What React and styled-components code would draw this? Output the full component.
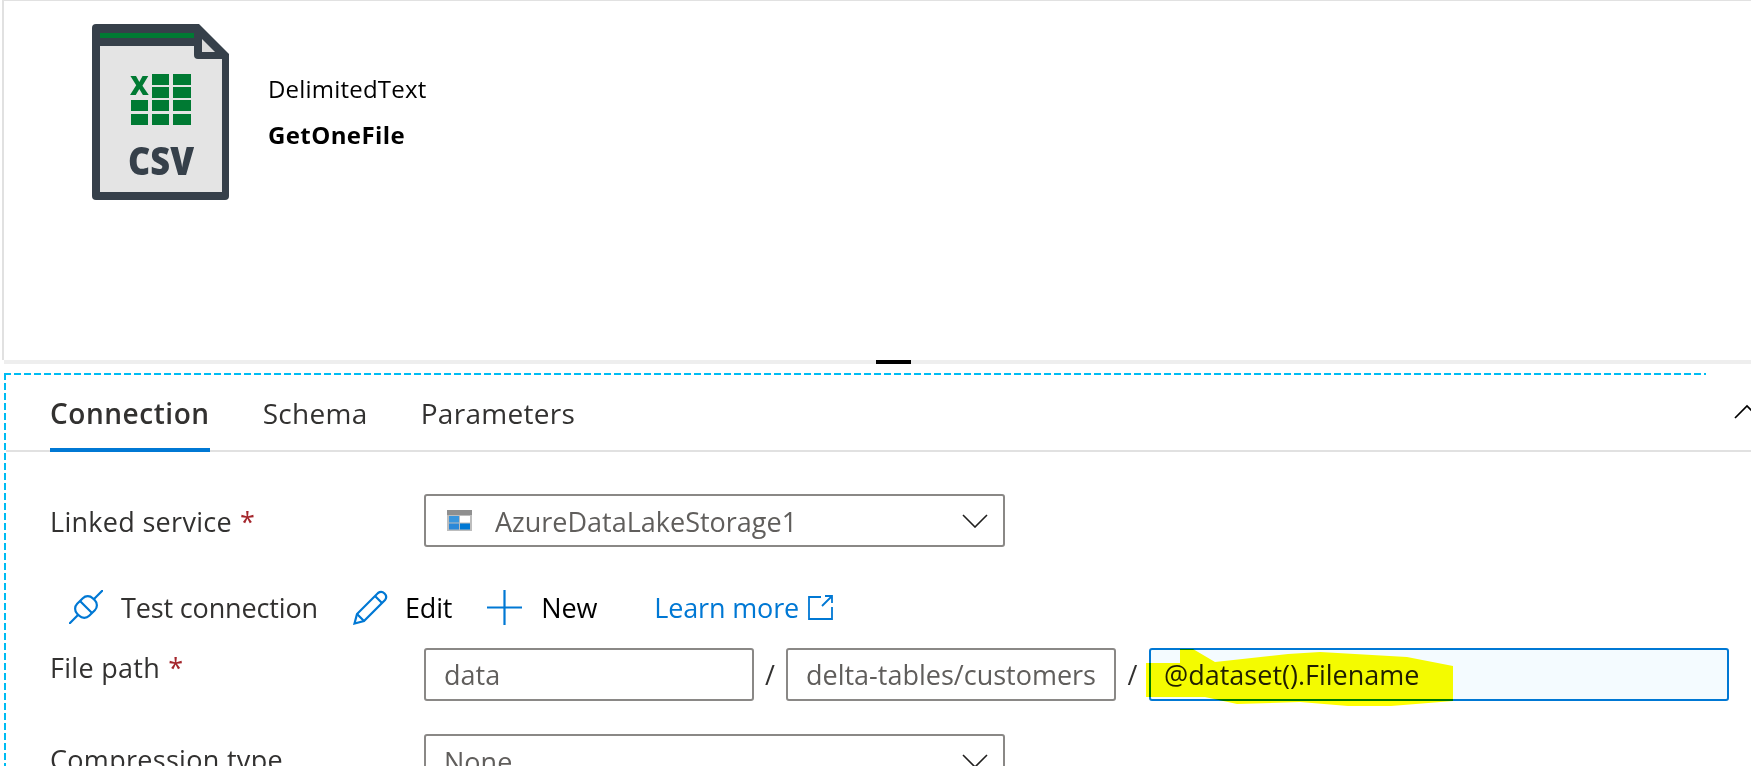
import styled, { createGlobalStyle } from 'styled-components';

const GlobalStyle = createGlobalStyle`
  html, body {
    margin: 0;
    padding: 0;
    background: #fff;
    overflow: hidden;
  }
  body {
    font-family: "Open Sans", "Noto Sans", sans-serif;
  }
`;

const Page = styled.div`
  width: 1751px;
  height: 766px;
  overflow: hidden;
  background: #fff;
`;

const Preview = styled.div`
  box-sizing: border-box;
  height: 360px;
  margin-left: 2px;
  padding: 21px 0 0 86px;
  display: flex;
  align-items: flex-start;
  gap: 38px;
  border-top: 1px solid #e1e1e1;
  border-left: 2px solid #e1e1e1;
`;

const FileIcon = styled.svg`
  width: 140px;
  height: 178px;
  flex: none;
`;

const Titles = styled.div`
  display: flex;
  flex-direction: column;
  padding-top: 52px;
  color: #000;
`;

const TypeName = styled.div`
  font-size: 24px;
  line-height: 30px;
  letter-spacing: 0.2px;
`;

const DatasetName = styled.div`
  margin-top: 16px;
  font-size: 24px;
  line-height: 30px;
  font-weight: 700;
  letter-spacing: 0.4px;
`;

const Splitter = styled.div`
  height: 4px;
  background: #eeeeee;
  margin-left: 4px;
`;

const SplitHandle = styled.div`
  width: 35px;
  height: 4px;
  background: #000;
  margin-left: 872px;
`;

const Panel = styled.div`
  position: relative;
  margin: 9px 45px 0 4px;
  padding: 2px 0 0 2px;
  height: 500px;
  background-image:
    repeating-linear-gradient(90deg, #00bcf2 0 7px, transparent 7px 10px),
    repeating-linear-gradient(180deg, #00bcf2 0 7px, transparent 7px 10px);
  background-size: 100% 2px, 2px 100%;
  background-position: top left, top left;
  background-repeat: no-repeat;
`;

const TabBar = styled.div`
  display: flex;
  gap: 53px;
  height: 77px;
  padding-left: 44px;
  margin-right: -45px;
  border-bottom: 2px solid #e1e1e1;
  box-sizing: border-box;
`;

const Tab = styled.div`
  height: 77px;
  box-sizing: border-box;
  padding-top: 20px;
  font-size: 28px;
  line-height: 36px;
  letter-spacing: ${p => (p.$active ? '0.55px' : '0.3px')};
  font-weight: ${p => (p.$active ? 600 : 400)};
  color: #323130;
  border-bottom: ${p => (p.$active ? '4px solid #0078d4' : 'none')};
`;

const Collapse = styled.svg`
  position: absolute;
  right: -54px;
  top: 31px;
  width: 26px;
  height: 15px;
`;

const Form = styled.div`
  padding: 42px 0 0 44px;
  margin-right: -45px;
`;

const FieldRow = styled.div`
  display: grid;
  grid-template-columns: 374px 1fr;
  align-items: start;
  margin-top: ${p => p.$gap || 0}px;
`;

const Label = styled.div`
  font-size: 27px;
  line-height: 34px;
  font-weight: 500;
  letter-spacing: 0.3px;
  color: #323130;
  padding-top: ${p => p.$top || 0}px;
  white-space: nowrap;
`;

const Star = styled.span`
  color: #a4262c;
  margin-left: 8px;
`;

const Select = styled.div`
  box-sizing: border-box;
  width: 581px;
  height: 53px;
  display: flex;
  align-items: center;
  padding: 0 15px 0 ${p => p.$pad}px;
  border: 2px solid #8a8886;
  border-radius: 3px;
  font-size: 27px;
  color: #605e5c;
`;

const SelectValue = styled.span`
  flex: 1;
  margin-left: ${p => p.$gap || 0}px;
  padding-top: 2px;
`;

const Chevron = styled.svg`
  width: 26px;
  height: 14px;
  flex: none;
`;

const ActionRow = styled.div`
  display: flex;
  align-items: center;
  height: 50px;
  margin-top: 35px;
  padding-left: 19px;
  font-size: 27px;
  letter-spacing: -0.15px;
  white-space: nowrap;
`;

const Action = styled.div`
  display: flex;
  align-items: center;
  gap: ${p => p.$gap}px;
  margin-right: ${p => p.$after}px;
  color: ${p => p.$color || '#000'};
`;

const ActionIcon = styled.svg`
  flex: none;
  width: ${p => p.$size}px;
  height: ${p => p.$size}px;
`;

const PathRow = styled.div`
  display: flex;
  align-items: center;
`;

const PathBox = styled.div`
  position: relative;
  box-sizing: border-box;
  width: ${p => p.$width}px;
  height: 53px;
  display: flex;
  align-items: center;
  padding-left: ${p => p.$pad}px;
  border: 2px solid ${p => (p.$focused ? '#0078d4' : '#8a8886')};
  border-radius: 3px;
  background: ${p => (p.$focused ? '#f4fbff' : '#fff')};
  color: ${p => (p.$focused ? '#201f1e' : '#605e5c')};
  font-size: 27px;
  white-space: nowrap;
`;

const Slash = styled.span`
  width: ${p => p.$width}px;
  text-align: center;
  font-size: 27px;
  color: #323130;
`;

const Highlight = styled.svg`
  position: absolute;
  left: -11px;
  top: -8px;
  width: 320px;
  height: 70px;
  mix-blend-mode: multiply;
  pointer-events: none;
`;

const grid = [
  [152, 73], [173, 73],
  [152, 86], [173, 86],
  [131, 99], [152, 99], [173, 99],
  [131, 113], [152, 113], [173, 113],
];

export default function App() {
  return (
    <Page>
      <GlobalStyle />
      <Preview>
        <FileIcon viewBox="90 21 140 178">
          <path d="M96 23 H199 L229 53 V195 a4 4 0 0 1 -4 4 H96 a4 4 0 0 1 -4 -4 V27 a4 4 0 0 1 4 -4 Z" fill="#36404a" />
          <path d="M100 45 H194 V54 a4 4 0 0 0 4 4 H222 V191 H100 Z" fill="#e4e4e4" />
          <rect x="100" y="32" width="94" height="5" fill="#007a33" />
          <path d="M202 38 L215 51 H202 Z" fill="#dcdcdc" />
          {grid.map(([x, y]) => (
            <rect key={`${x}-${y}`} x={x} y={y} width={x === 173 ? 18 : 17} height="11" fill="#007a33" />
          ))}
          <text x="139.5" y="94" textAnchor="middle" fontFamily="Open Sans" fontWeight="800" fontSize="26" fill="#007a33">X</text>
          <text x="161" y="174" textAnchor="middle" fontFamily="Open Sans" fontWeight="800" fontSize="38" textLength="66" lengthAdjust="spacingAndGlyphs" fill="#36404a">CSV</text>
        </FileIcon>
        <Titles>
          <TypeName>DelimitedText</TypeName>
          <DatasetName>GetOneFile</DatasetName>
        </Titles>
      </Preview>
      <Splitter>
        <SplitHandle />
      </Splitter>
      <Panel>
        <TabBar>
          <Tab $active>Connection</Tab>
          <Tab>Schema</Tab>
          <Tab>Parameters</Tab>
        </TabBar>
        <Collapse viewBox="0 0 26 15">
          <path d="M1 14 L13 2 L25 14" fill="none" stroke="#000" strokeWidth="1.7" />
        </Collapse>
        <Form>
          <FieldRow>
            <Label $top={11}>Linked service<Star>*</Star></Label>
            <Select $pad={21}>
              <svg width="25" height="21" viewBox="0 0 25 21">
                <rect width="25" height="21" fill="#bdbdbd" />
                <rect width="25" height="5" fill="#8f8f8f" />
                <rect x="2" y="6" width="10" height="6.5" fill="#3a96dd" />
                <rect x="13" y="6" width="10" height="6.5" fill="#fff" />
                <rect x="2" y="13.5" width="10" height="6" fill="#2b88d8" />
                <rect x="13" y="13.5" width="10" height="6" fill="#0078d4" />
              </svg>
              <SelectValue $gap={23}>AzureDataLakeStorage1</SelectValue>
              <Chevron viewBox="0 0 26 14">
                <path d="M1 1 L13 13 L25 1" fill="none" stroke="#201f1e" strokeWidth="1.6" />
              </Chevron>
            </Select>
          </FieldRow>
          <ActionRow>
            <Action $gap={18} $after={35} $color="#323130">
              <ActionIcon $size={34} viewBox="0 0 34 34" fill="none" stroke="#0078d4" strokeWidth="2.2">
                <g transform="rotate(-45 17 17)">
                  <path d="M-7 17 H6 M28 17 H41 M17 8.5 V25.5" />
                  <rect x="6" y="8.5" width="22" height="17" rx="7" />
                </g>
              </ActionIcon>
              Test connection
            </Action>
            <Action $gap={17} $after={35}>
              <ActionIcon $size={35} viewBox="0 0 35 35" fill="none" stroke="#0078d4" strokeWidth="2.2">
                <path d="M1.5 33.5 L4 24 L25 3 a5 5 0 0 1 7 7 L11 31 Z" />
                <path d="M4 24 L11 31 M22 6 L29 13" />
              </ActionIcon>
              Edit
            </Action>
            <Action $gap={19} $after={57}>
              <ActionIcon $size={35} viewBox="0 0 35 35" stroke="#0078d4" strokeWidth="2.2">
                <path d="M0 17.5 H35 M17.5 0 V35" />
              </ActionIcon>
              New
            </Action>
            <Action $gap={9} $after={0} $color="#0078d4">
              Learn more
              <ActionIcon $size={25} viewBox="0 0 25 25" fill="none" stroke="#0078d4" strokeWidth="1.8">
                <path d="M13 2 H1 V24 H24 V12 M17 1 H24 V8 M24 1 L14 11" />
              </ActionIcon>
            </Action>
          </ActionRow>
          <FieldRow $gap={16}>
            <Label $top={3}>File path<Star>*</Star></Label>
            <PathRow>
              <PathBox $width={330} $pad={18}>data</PathBox>
              <Slash $width={32}>/</Slash>
              <PathBox $width={330} $pad={18}>delta-tables/customers</PathBox>
              <Slash $width={33}>/</Slash>
              <PathBox $width={580} $pad={13} $focused>
                @dataset().Filename
                <Highlight viewBox="1140 643 320 70">
                  <path d="M1146 664 L1180 664 L1180 650 L1193 650 L1215 663 L1288 655 L1320 653 L1407 658 L1453 667 L1453 702 L1391 707 L1348 707 L1300 703 L1237 705 L1205 698 L1146 698 Z" fill="#ffff00" />
                </Highlight>
              </PathBox>
            </PathRow>
          </FieldRow>
          <FieldRow $gap={33}>
            <Label $top={9}>Compression type</Label>
            <Select $pad={18}>
              <SelectValue>None</SelectValue>
              <Chevron viewBox="0 0 26 14">
                <path d="M1 1 L13 13 L25 1" fill="none" stroke="#201f1e" strokeWidth="1.6" />
              </Chevron>
            </Select>
          </FieldRow>
        </Form>
      </Panel>
    </Page>
  );
}
